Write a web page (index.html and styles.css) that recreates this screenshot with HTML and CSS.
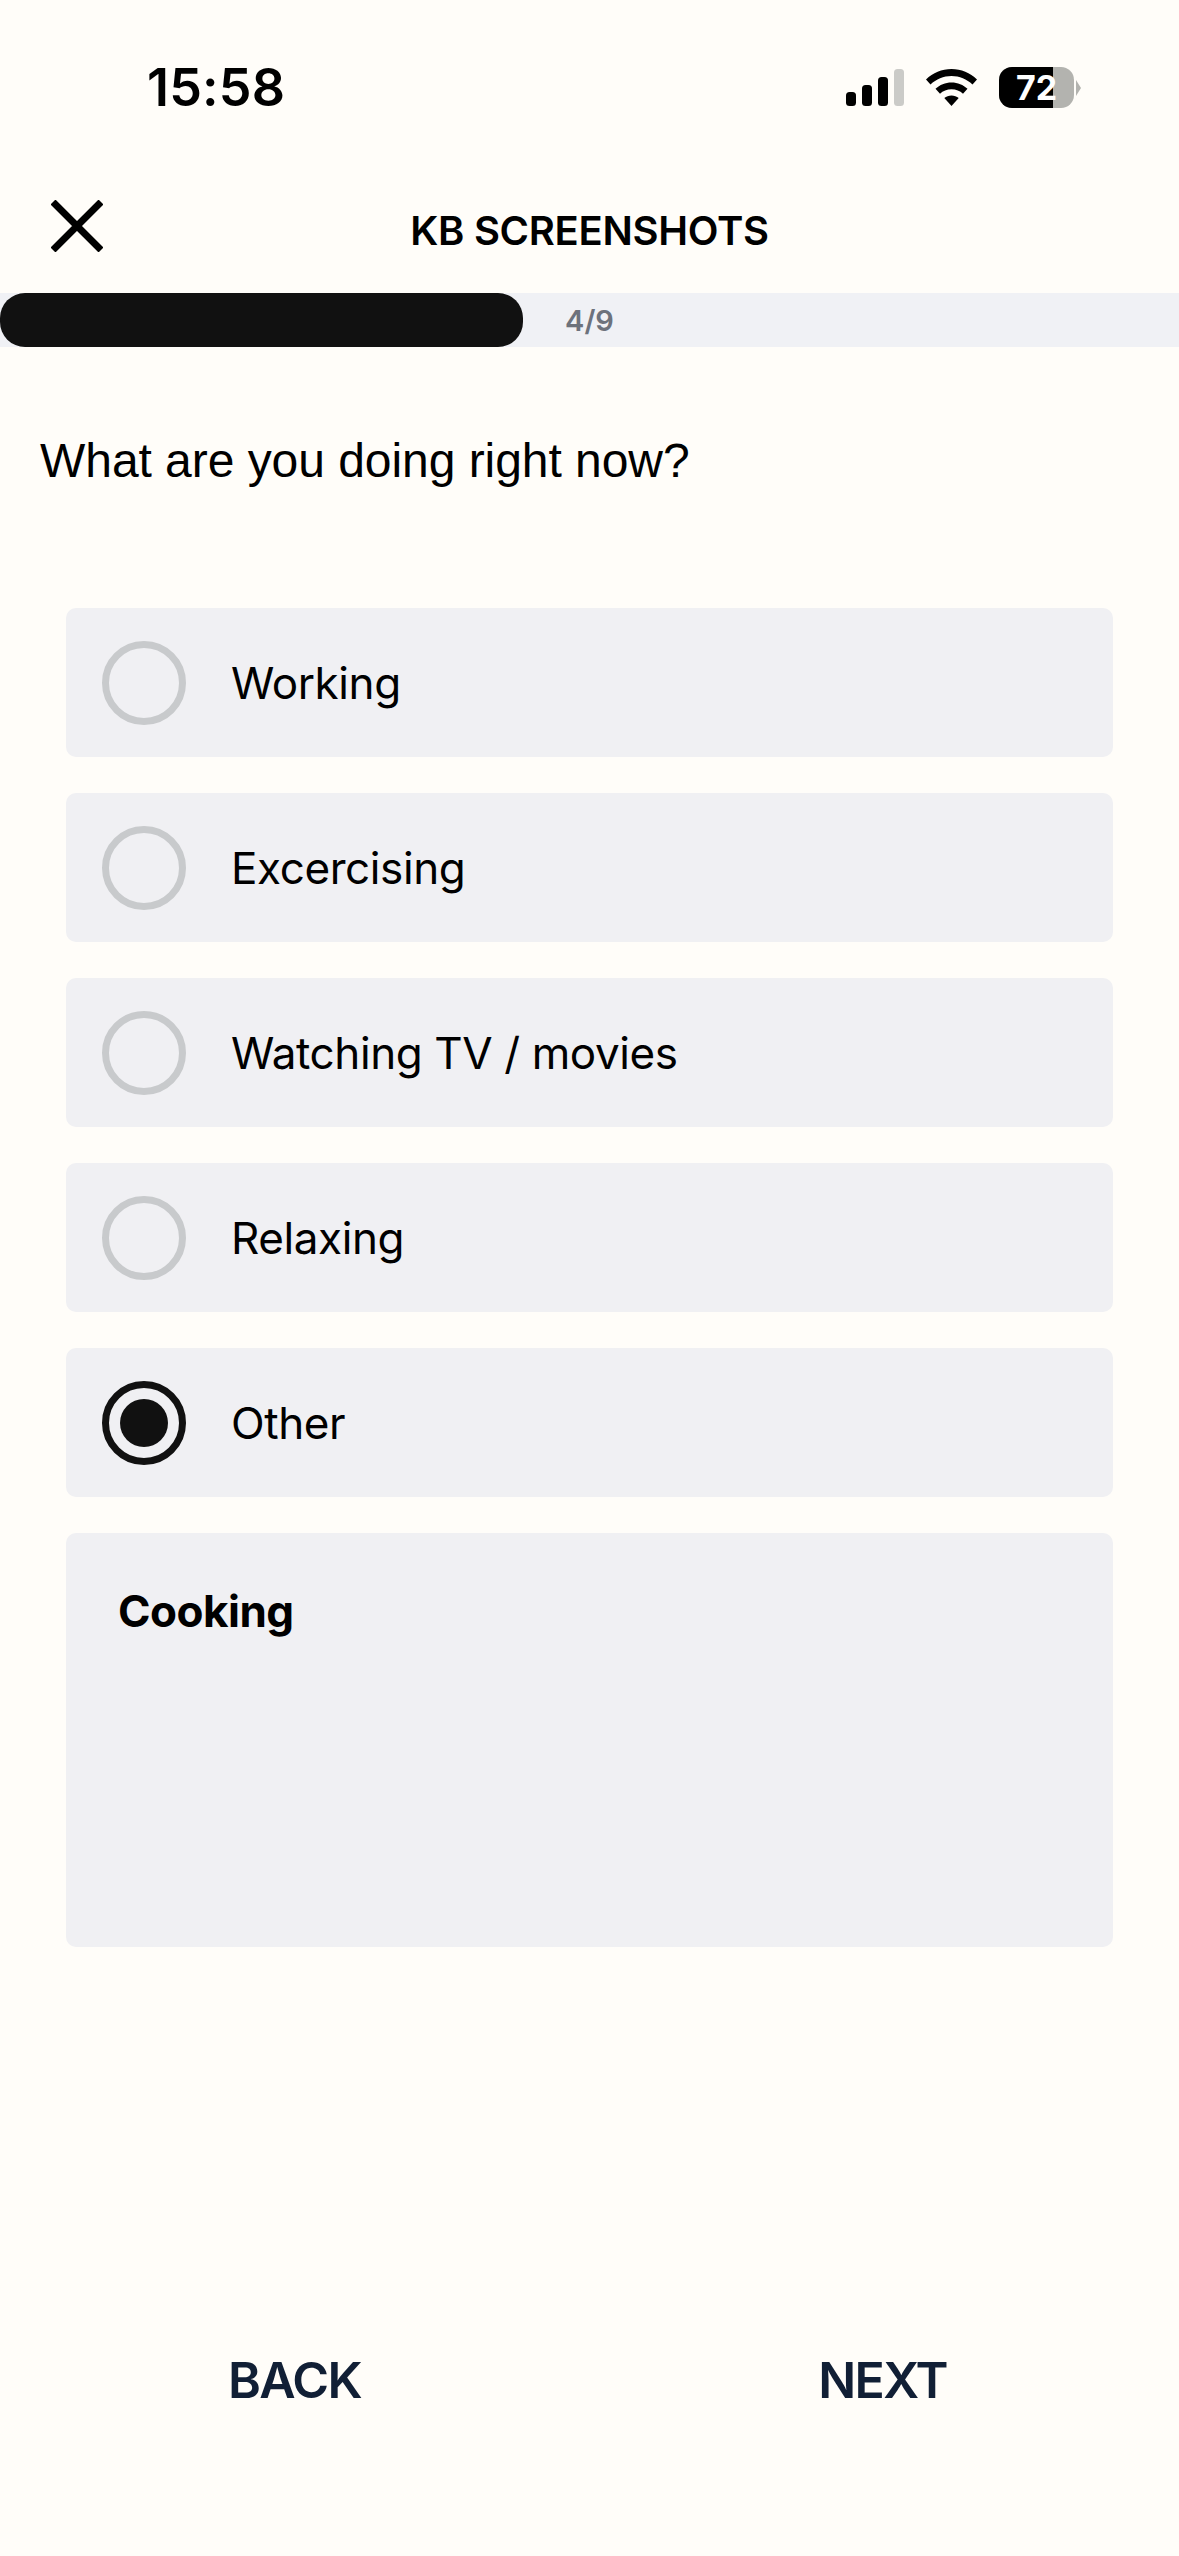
FILE: index.html
```html
<!DOCTYPE html>
<html>
<head>
<meta charset="utf-8"/>
<title>KB Screenshots</title>
<link rel="stylesheet" href="styles.css">
</head>
<body>
<div class="page">
  <div class="status">
    <span class="time">15:58</span>
    <div class="status-icons">
      <svg class="signal" width="58" height="37" viewBox="0 0 58 37">
        <rect x="0" y="23" width="10" height="14" rx="3.5" fill="#000"/>
        <rect x="16" y="16" width="10" height="21" rx="3.5" fill="#000"/>
        <rect x="32" y="8" width="10" height="29" rx="3.5" fill="#000"/>
        <rect x="48" y="0" width="10" height="37" rx="3.5" fill="#cbcbc8"/>
      </svg>
      <svg class="wifi" width="51" height="37" viewBox="0 0 51 37">
        <path d="M25.500 0C15.700 0 7 3.800 0 10.500L4.500 15.500C10.200 10.200 17.500 7 25.500 7C33.500 7 40.800 10.200 46.500 15.500L51 10.500C44 3.800 35.300 0 25.500 0Z" fill="#000"/>
        <path d="M25.500 13.500C19.300 13.500 13.700 15.900 9.500 19.800L14 24.800C17 22 21 20.300 25.500 20.300C30 20.300 34 22 37 24.800L41.500 19.800C37.300 15.900 31.700 13.500 25.500 13.500Z" fill="#000"/>
        <path d="M25.500 26.500C22.700 26.500 20.300 27.500 18.300 29.100L25.500 37L32.700 29.100C30.700 27.500 28.300 26.500 25.500 26.500Z" fill="#000"/>
      </svg>
      <div class="battery">
        <div class="battery-body">
          <div class="battery-fill"></div>
          <span class="battery-num">72</span>
        </div>
        <svg class="battery-nub" width="5" height="16" viewBox="0 0 5 16">
          <path d="M0 0L5 8L0 16Z" fill="#b3b3af"/>
        </svg>
      </div>
    </div>
  </div>

  <div class="header">
    <svg class="close" width="52" height="52" viewBox="0 0 52 52">
      <path d="M2 2L50 50M50 2L2 50" stroke="#000" stroke-width="7" fill="none"/>
    </svg>
    <div class="title">KB SCREENSHOTS</div>
  </div>

  <div class="progress">
    <div class="progress-fill"></div>
    <div class="progress-label">4/9</div>
  </div>

  <div class="question">What are you doing right now?</div>

  <div class="options">
    <div class="option"><span class="radio"></span><span class="option-text">Working</span></div>
    <div class="option"><span class="radio"></span><span class="option-text">Excercising</span></div>
    <div class="option"><span class="radio"></span><span class="option-text">Watching TV / movies</span></div>
    <div class="option"><span class="radio"></span><span class="option-text">Relaxing</span></div>
    <div class="option"><span class="radio radio-on"></span><span class="option-text">Other</span></div>
    <div class="answer">Cooking</div>
  </div>

  <div class="footer">
    <span class="nav-btn">BACK</span>
    <span class="nav-btn">NEXT</span>
  </div>
</div>
</body>
</html>
```

FILE: styles.css
```css
body {
   margin: 0;
   background-color: #fffdf9;
   font-family: "Inter", "Liberation Sans", sans-serif;
   color: #000;
}

.page {
   width: 1179px;
   height: 2556px;
   display: flex;
   flex-direction: column;
}

/* status bar */
.status {
   height: 172px;
   padding: 58px 98px 0 147px;
   box-sizing: border-box;
   display: flex;
   justify-content: space-between;
   align-items: flex-start;
}

.time {
   font-size: 52px;
   font-weight: 600;
   line-height: 60px;
   letter-spacing: 0.2px;
}

.status-icons {
   display: flex;
   align-items: center;
   gap: 22px;
   padding-top: 9px;
}

.battery {
   display: flex;
   align-items: center;
   gap: 2px;
}

.battery-body {
   width: 75px;
   height: 41px;
   border-radius: 13px;
   background-color: #b3b3af;
   overflow: hidden;
   display: grid;
}

.battery-fill {
   grid-area: 1 / 1;
   width: 54px;
   background-color: #000;
}

.battery-num {
   grid-area: 1 / 1;
   justify-self: center;
   color: #fff;
   font-size: 34px;
   font-weight: 700;
   line-height: 41px;
}

/* header */
.header {
   height: 121px;
   display: flex;
   align-items: center;
   justify-content: center;
   position: relative;
}

.close {
   position: absolute;
   left: 51px;
   top: 28px;
}

.title {
   font-size: 40px;
   font-weight: 600;
   letter-spacing: -0.3px;
   padding-bottom: 4px;
}

/* progress */
.progress {
   height: 54px;
   background-color: #f0f1f5;
   display: grid;
}

.progress-fill {
   grid-area: 1 / 1;
   width: 523px;
   background-color: #111;
   border-radius: 25px;
}

.progress-label {
   grid-area: 1 / 1;
   justify-self: center;
   align-self: center;
   color: #6d727c;
   font-size: 29px;
   font-weight: 600;
}

.question {
   margin: 84px 0 0 40px;
   font-family: "Liberation Sans", Arial, sans-serif;
   font-size: 48px;
   line-height: 60px;
   height: 177px;
   letter-spacing: -0.05px;
}

/* options */
.options {
   padding: 0 66px;
   display: flex;
   flex-direction: column;
   gap: 36px;
}

.option {
   height: 149px;
   padding-left: 36px;
   background-color: #f0f0f3;
   border-radius: 10px;
   display: flex;
   align-items: center;
}

.radio {
   width: 84px;
   height: 84px;
   box-sizing: border-box;
   border: 7px solid #c8cacc;
   border-radius: 50%;
   display: flex;
   align-items: center;
   justify-content: center;
   flex-shrink: 0;
}

.radio-on {
   border-color: #111;
}

.radio-on::after {
   content: "";
   width: 48px;
   height: 48px;
   border-radius: 50%;
   background-color: #111;
}

.option-text {
   margin-left: 45px;
   font-size: 44px;
   letter-spacing: -0.4px;
}

.answer {
   height: 414px;
   box-sizing: border-box;
   padding: 50px 52px;
   background-color: #f0f0f3;
   border-radius: 10px;
   font-size: 44px;
   font-weight: 700;
   line-height: 56px;
   letter-spacing: -0.5px;
}

/* bottom nav */
.footer {
   margin-top: auto;
   height: 206px;
   padding: 0 232px 0 228px;
   display: flex;
   justify-content: space-between;
   align-items: flex-start;
}

.nav-btn {
   color: #111f35;
   font-size: 50px;
   font-weight: 600;
   line-height: 60px;
   letter-spacing: -1.6px;
}
```
